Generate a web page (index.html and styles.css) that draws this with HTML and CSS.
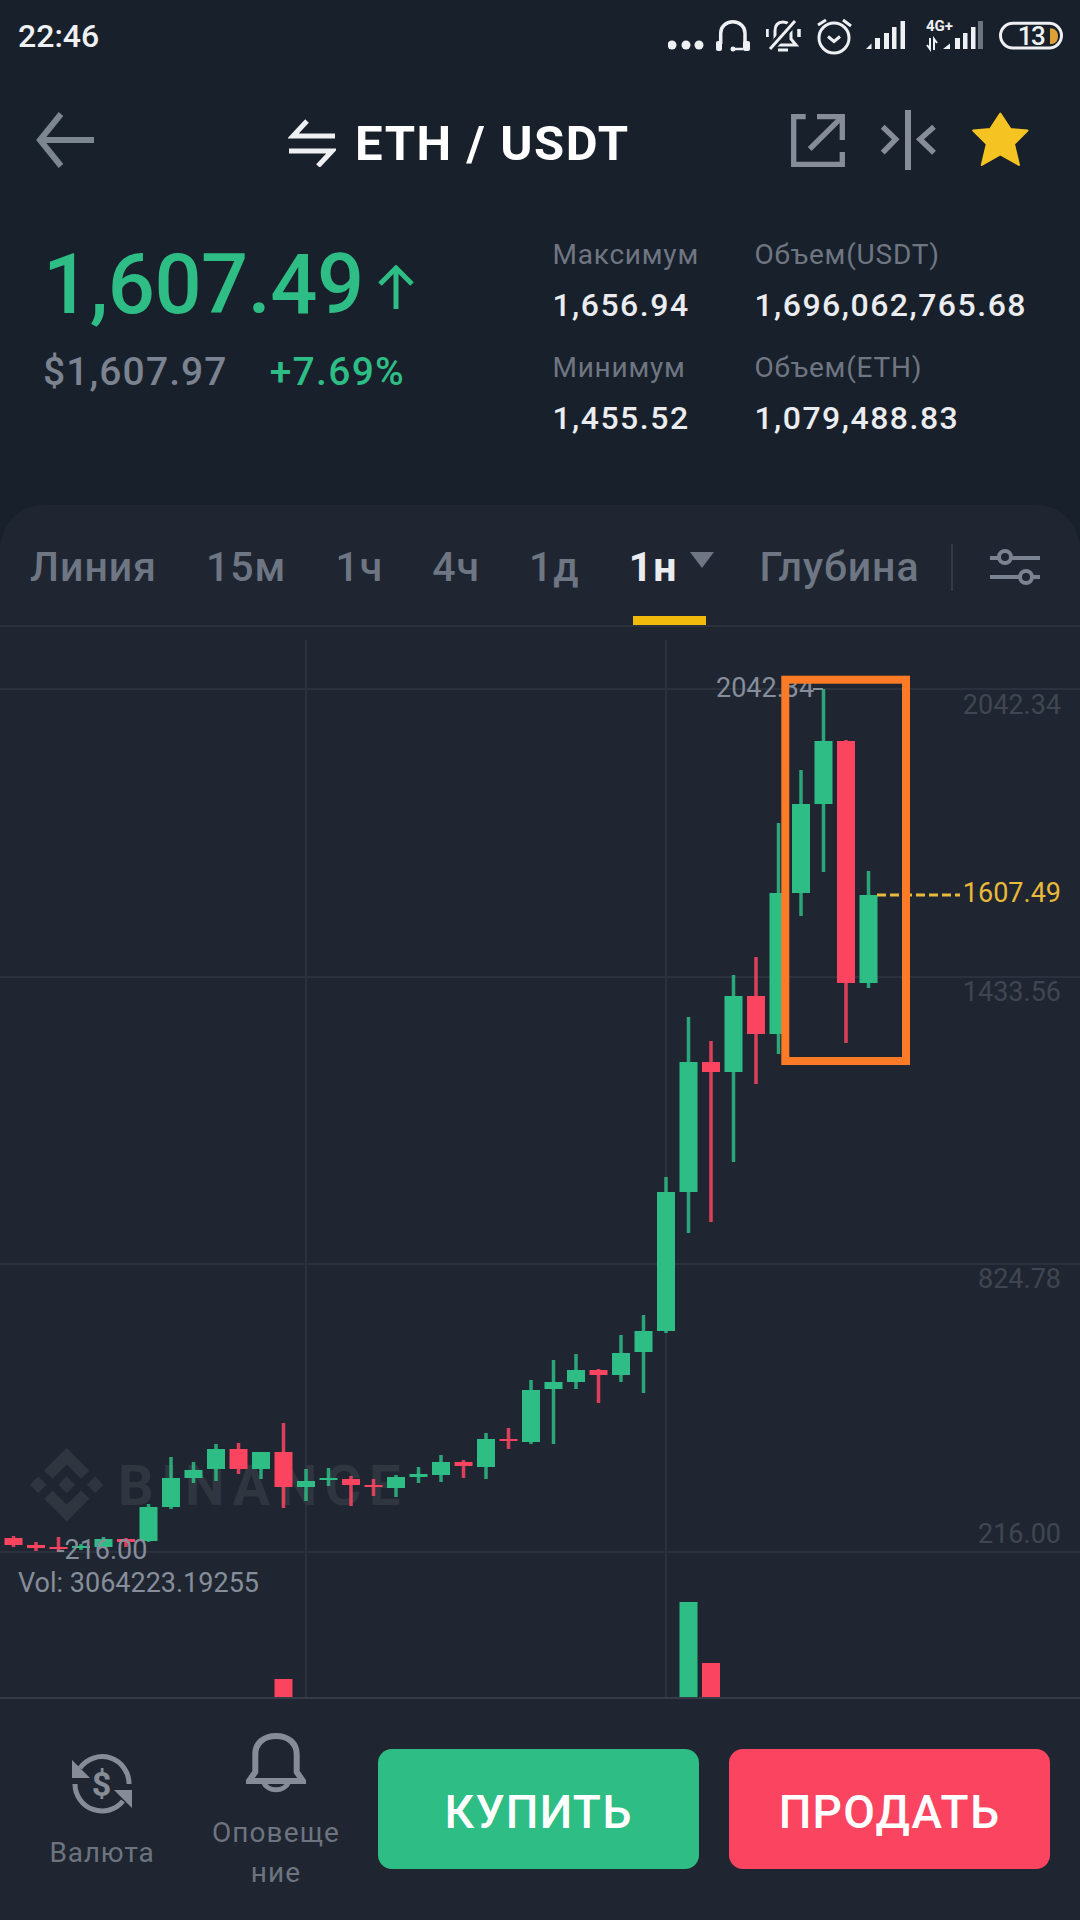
FILE: index.html
```html
<!DOCTYPE html>
<html lang="ru">
<head>
    <meta charset="UTF-8">
    <meta name="viewport" content="width=device-width, initial-scale=1.0">
    <title>ETH / USDT</title>
    <link rel="stylesheet" href="styles.css">
</head>
<body>
    <div class="status-bar">
        <span class="clock">22:46</span>
        <div class="status-icons">
            <svg width="36" height="40" viewBox="0 0 36 40"><g fill="#eef0f3"><circle cx="4" cy="29" r="4.500"/><circle cx="18" cy="29" r="4.500"/><circle cx="31" cy="29" r="4.500"/></g></svg>
            <svg width="38" height="40" viewBox="0 0 38 40" fill="none" stroke="#eef0f3" stroke-width="3.500"><path d="M4.700 28V17a12.150 11.300 0 0 1 24.300 0v11"/><path d="M27 33H17" stroke-width="2.500"/><circle cx="17" cy="33" r="2.500" fill="#eef0f3" stroke="none"/><rect x="0" y="25" width="6" height="10" rx="2" fill="#eef0f3" stroke="none"/><rect x="27" y="25" width="7" height="10" rx="2" fill="#eef0f3" stroke="none"/></svg>
            <svg width="39" height="40" viewBox="0 0 39 40" fill="none" stroke="#eef0f3" stroke-width="3"><path d="M5 29l4-6v-8c0-6 3-9 8-9s8 3 8 9v8l5 6z"/><path d="M12 34h10"/><path d="M3 34L30 4" stroke="#18202b" stroke-width="8"/><path d="M4 33L29 5"/><path d="M1 13v8M33 13v8" stroke-width="3.500"/></svg>
            <svg width="37" height="40" viewBox="0 0 37 40" fill="none" stroke="#eef0f3" stroke-width="3"><circle cx="17" cy="22" r="15"/><path d="M11 20.500l6 5 6-5"/><path d="M1 9l8-5M26 4l8 6"/></svg>
            <svg width="48" height="40" viewBox="0 0 48 40" class="signal"><path d="M0 33l5.500-5.500V33z"/><rect x="9" y="22" width="5" height="11"/><rect x="18" y="17" width="5" height="16"/><rect x="26" y="11" width="4.500" height="22"/><rect x="34.500" y="5" width="4.500" height="28"/></svg>
            <svg width="61" height="40" viewBox="0 0 61 40" class="signal"><text x="0" y="15" class="net-label">4G+</text><path d="M4 22v11l-3-4M8 34V23l3 4" fill="none" stroke="#eef0f3" stroke-width="2"/><path d="M17 33l7-5.500V33z"/><rect x="29" y="22" width="5" height="11"/><rect x="37" y="17" width="4.500" height="16"/><rect x="45" y="11" width="4.500" height="22"/><rect x="52" y="5" width="5" height="28" fill="#6d7480"/></svg>
            <svg width="64" height="40" viewBox="0 0 64 40"><rect x="1.500" y="7.200" width="61" height="24.800" rx="12.400" fill="none" stroke="#eef0f3" stroke-width="3"/><text x="32" y="29" class="battery-label" text-anchor="middle">13</text><path d="M51 12.300c5 0 8 3 8 8s-3 8-8 8z" fill="#dca036"/></svg>
        </div>
    </div>

    <div class="header">
        <svg class="back" width="58" height="56" viewBox="0 0 58 56" fill="none" stroke="#7b8691" stroke-width="6"><path d="M58 28H4"/><path d="M25 2L4 28l21 26"/></svg>
        <div class="title">
            <svg width="48" height="48" viewBox="0 0 48 48" fill="none" stroke="#eef0f3" stroke-width="5"><path d="M19 2L5 17h42"/><path d="M1 32h43L30 47"/></svg>
            <span>ETH / USDT</span>
        </div>
        <div class="header-actions">
            <svg class="share" width="54" height="53" viewBox="0 0 54 53" fill="none" stroke="#868d99" stroke-width="5.300"><path d="M14.700 2.700h-12v47.600h48.600V38"/><path d="M26 2.700h25.300V26"/><path d="M51.300 2.700L18.700 35"/></svg>
            <svg class="compress" width="57" height="60" viewBox="0 0 57 60" fill="none" stroke="#868d99" stroke-width="5.500"><path d="M28 0v60" stroke-width="6"/><path d="M2.700 16.700l13 12.600-13 13.400"/><path d="M54 16.700L40 29.300l14 13.400"/></svg>
            <svg class="star" width="58" height="56" viewBox="0 0 58 56"><path d="M28.300 1.500L38.500 17l17 1.500-13.500 13.500 5 21-18.700-10.500L9.800 53l5-21L1.200 18.500l17-1.500z" fill="#f5c422" stroke="#f5c422" stroke-width="2" stroke-linejoin="round"/></svg>
        </div>
    </div>

    <div class="stats">
        <div class="price-box">
            <div class="price">
                <span>1,607.49</span>
                <svg width="36" height="44" viewBox="0 0 36 44" fill="none" stroke="#2ebd85" stroke-width="5"><path d="M18 44V3"/><path d="M2 19L18 3l16 16"/></svg>
            </div>
            <div class="price-sub">
                <span class="usd">$1,607.97</span>
                <span class="change">+7.69%</span>
            </div>
        </div>
        <div class="market">
            <div class="cell"><span class="cell-label">Максимум</span><span class="cell-value">1,656.94</span></div>
            <div class="cell"><span class="cell-label">Объем(USDT)</span><span class="cell-value">1,696,062,765.68</span></div>
            <div class="cell"><span class="cell-label">Минимум</span><span class="cell-value">1,455.52</span></div>
            <div class="cell"><span class="cell-label">Объем(ETH)</span><span class="cell-value">1,079,488.83</span></div>
        </div>
    </div>

    <div class="panel">
        <div class="tabs">
            <span class="tab">Линия</span>
            <span class="tab">15м</span>
            <span class="tab">1ч</span>
            <span class="tab">4ч</span>
            <span class="tab">1д</span>
            <span class="tab active">1н<i class="caret"></i></span>
            <span class="tab tab-depth">Глубина</span>
            <span class="tab-divider"></span>
            <svg width="50" height="36" viewBox="0 0 50 36" fill="none" stroke="#7b8290" stroke-width="4"><path d="M0 9h9M22 9h28"/><circle cx="15" cy="8" r="6"/><path d="M0 28h29M42 28h8"/><circle cx="36" cy="28" r="6"/></svg>
        </div>

        <div class="chart">
            <svg id="chart" width="1080" height="1070" viewBox="0 627 1080 1070"></svg>
        </div>

        <div class="bottom-bar">
            <div class="action action-currency">
                <svg width="60" height="60" viewBox="0 0 60 60" fill="none" stroke="#868d99" stroke-width="5"><path d="M8 14A27 27 0 0 1 57 30"/><path d="M3 30a27 27 0 0 0 48 17"/><path d="M0 6v18h18zM60 36v18L42 36z" fill="#868d99" stroke="none"/><text x="30" y="42" class="dollar" text-anchor="middle">$</text></svg>
                <span>Валюта</span>
            </div>
            <div class="action action-alert">
                <svg width="60" height="63" viewBox="0 0 60 63" fill="none" stroke="#868d99" stroke-width="6"><path d="M3 48l6.300-9V21C9.300 10 18 3 30 3s20.700 7 20.700 18v18l6.300 9z"/><path d="M18 50a12.500 9.500 0 0 0 24 0" stroke-width="5"/></svg>
                <span>Оповеще<br>ние</span>
            </div>
            <button class="btn btn-buy">КУПИТЬ</button>
            <button class="btn btn-sell">ПРОДАТЬ</button>
        </div>
    </div>

    <script src="chart.js"></script>
</body>
</html>
```

FILE: styles.css
```css
* {
    margin: 0;
    padding: 0;
    box-sizing: border-box;
}

body {
    width: 1080px;
    height: 1920px;
    overflow: hidden;
    background: #18202b;
    font-family: 'Roboto', sans-serif;
    color: #eaecef;
}

.status-bar {
    height: 72px;
    display: flex;
    align-items: center;
    justify-content: space-between;
    padding: 0 17px 0 18px;
}

.clock {
    font-size: 32px;
    font-weight: 500;
    color: #eef0f3;
}

.status-icons {
    display: flex;
    align-items: center;
    gap: 12px;
}

.signal {
    fill: #eef0f3;
}

.net-label {
    font-size: 15px;
    font-weight: 700;
    fill: #eef0f3;
}

.battery-label {
    font-size: 26px;
    font-weight: 500;
    letter-spacing: -1.500px;
    fill: #eef0f3;
}

.header {
    height: 136px;
    display: flex;
    align-items: center;
    padding: 0 50px 0 36px;
}

.title {
    display: flex;
    align-items: center;
    gap: 19px;
    margin: 6px 0 0 194px;
    font-size: 49px;
    font-weight: 700;
    letter-spacing: 1.600px;
    color: #fff;
}

.header-actions {
    display: flex;
    align-items: center;
    gap: 35px;
    margin-left: auto;
}

.stats {
    height: 297px;
    display: flex;
    justify-content: space-between;
    padding: 28px 53px 0 43px;
}

.price {
    display: flex;
    align-items: center;
    gap: 14px;
    font-size: 83px;
    font-weight: 500;
    color: #2ebd85;
    line-height: 98px;
    letter-spacing: -.500px;
}

.price svg {
    margin-top: 4px;
}

.price-sub {
    display: flex;
    gap: 42px;
    margin-top: 14px;
    font-size: 39px;
    line-height: 48px;
}

.usd {
    color: #7b8290;
    font-weight: 500;
    letter-spacing: 1.100px;
}

.change {
    color: #2ebd85;
    font-weight: 500;
    letter-spacing: 1.300px;
}

.market {
    display: grid;
    grid-template-columns: 202px auto;
    row-gap: 13px;
    align-content: start;
    margin-top: -3px;
}

.cell {
    display: flex;
    flex-direction: column;
}

.cell-label {
    font-size: 28px;
    line-height: 44px;
    letter-spacing: .8px;
    color: #6f7682;
}

.cell-value {
    font-size: 32px;
    line-height: 56px;
    font-weight: 500;
    letter-spacing: 1.500px;
    color: #eaecef;
}

.panel {
    height: 1415px;
    background: #1f2631;
    border-radius: 44px 44px 0 0;
}

.tabs {
    height: 122px;
    display: flex;
    align-items: stretch;
    gap: 49px;
    padding: 4px 0 0 30px;
    border-bottom: 2px solid #2a313c;
    font-size: 41px;
    font-weight: 500;
    letter-spacing: 1px;
    color: #6e7683;
}

.tab {
    position: relative;
    display: flex;
    align-items: center;
}

.tab.active {
    color: #eaecef;
    font-weight: 700;
}

.tab.active::after {
    content: '';
    position: absolute;
    left: 4px;
    bottom: 0;
    width: 73px;
    height: 9px;
    background: #f0b90b;
}

.caret {
    width: 0;
    height: 0;
    margin: -14px 0 0 13px;
    border-left: 12px solid transparent;
    border-right: 12px solid transparent;
    border-top: 16px solid #6e7683;
}

.tab-depth {
    margin-left: -4px;
}

.tab-divider {
    align-self: center;
    width: 2px;
    height: 47px;
    margin-left: -18px;
    background: #343b46;
}

.tabs svg {
    align-self: center;
    margin-left: -12px;
}

.chart {
    height: 1070px;
}

.chart svg {
    display: block;
}

.grid-line {
    stroke: #2b323d;
    stroke-width: 2;
}

.watermark {
    font-size: 56px;
    font-weight: 700;
    letter-spacing: 7.500px;
    fill: #30363f;
}

.watermark-logo {
    fill: #30363f;
}

.axis-label {
    font-size: 27px;
    fill: #3f4651;
}

.axis-label.last {
    fill: #e8b93a;
}

.chart-note {
    font-size: 27px;
    fill: #868e9b;
}

.bottom-bar {
    height: 223px;
    display: flex;
    align-items: flex-start;
    border-top: 2px solid #353c47;
    font-size: 28px;
    letter-spacing: .8px;
    color: #6d7480;
}

.action {
    display: flex;
    flex-direction: column;
    align-items: center;
    text-align: center;
}

.action span {
    line-height: 40px;
}

.action-currency {
    width: 204px;
    padding-top: 55px;
    gap: 19px;
}

.action-alert {
    width: 144px;
    padding-top: 34px;
    gap: 17px;
    letter-spacing: 1.100px;
}

.dollar {
    font-size: 34px;
    font-weight: 700;
    fill: #868d99;
    stroke: none;
}

.btn {
    width: 321px;
    height: 120px;
    margin-top: 50px;
    padding-top: 5px;
    border: none;
    border-radius: 14px;
    font-family: 'Roboto', sans-serif;
    font-size: 46px;
    font-weight: 500;
    letter-spacing: 1.300px;
    color: #fff;
}

.btn-buy {
    margin-left: 30px;
    background: #2ebd85;
}

.btn-sell {
    margin-left: 30px;
    background: #fb4560;
}
```

FILE: chart.js
```js
const NS = 'http://www.w3.org/2000/svg';
const GREEN = '#2ebd85';
const RED = '#fb4560';
const svg = document.getElementById('chart');

// [center x, wick top, wick bottom, body top, body bottom, color]
const candles = [
    [13.5, 1536, 1547, 1538, 1545, RED],
    [36, 1542, 1551, 1545, 1548, RED],
    [58.5, 1537, 1552, 1547, 1549, RED],
    [81, 1544, 1550, 1546, 1548, GREEN],
    [103.5, 1537, 1548, 1539, 1547, GREEN],
    [126, 1538, 1547, 1539, 1542, RED],
    [148.5, 1504, 1542, 1507, 1541, GREEN],
    [171, 1457, 1509, 1478, 1507, GREEN],
    [193.5, 1462, 1483, 1470, 1478, GREEN],
    [216, 1444, 1481, 1449, 1469, GREEN],
    [238.5, 1443, 1474, 1449, 1469, RED],
    [261, 1452, 1479, 1452, 1469, GREEN],
    [283.5, 1423, 1508, 1452, 1487, RED],
    [306, 1469, 1501, 1481, 1487, GREEN],
    [328.5, 1468, 1486, 1478, 1480, GREEN],
    [351, 1476, 1506, 1479, 1485, RED],
    [373.5, 1479, 1496, 1485, 1487, RED],
    [396, 1475, 1497, 1477, 1488, GREEN],
    [418.5, 1467, 1483, 1474, 1477, GREEN],
    [441, 1455, 1482, 1462, 1475, GREEN],
    [463.5, 1460, 1478, 1462, 1466, RED],
    [486, 1433, 1479, 1439, 1467, GREEN],
    [508.5, 1428, 1449, 1439, 1441, RED],
    [531, 1380, 1444, 1390, 1442, GREEN],
    [553.5, 1360, 1444, 1382, 1389, GREEN],
    [576, 1354, 1389, 1370, 1382, GREEN],
    [598.5, 1369, 1403, 1370, 1375, RED],
    [621, 1335, 1382, 1353, 1375, GREEN],
    [643.5, 1315, 1393, 1331, 1352, GREEN],
    [666, 1177, 1333, 1192, 1331, GREEN],
    [688.5, 1017, 1233, 1062, 1192, GREEN],
    [711, 1041, 1222, 1062, 1072, RED],
    [733.5, 975, 1162, 996, 1072, GREEN],
    [756, 957, 1084, 996, 1034, RED],
    [778.5, 823, 1054, 893, 1034, GREEN],
    [801, 770, 916, 804, 893, GREEN],
    [823.5, 689, 872, 741, 804, GREEN],
    [846, 740, 1043, 741, 983, RED],
    [868.5, 871, 988, 895, 983, GREEN]
];

// [x, top, color]
const volumes = [
    [283.5, 1679, RED],
    [688.5, 1602, GREEN],
    [711, 1663, RED]
];

const axisLabels = [
    ['2042.34', 714, ''],
    ['1607.49', 902, 'last'],
    ['1433.56', 1001, ''],
    ['824.78', 1288, ''],
    ['216.00', 1543, '']
];

function add(tag, attrs, parent = svg) {
    const el = document.createElementNS(NS, tag);
    for (const key in attrs) el.setAttribute(key, attrs[key]);
    parent.appendChild(el);
    return el;
}

function addText(text, x, y, cls, anchor = 'start') {
    add('text', { x, y, class: cls, 'text-anchor': anchor }).textContent = text;
}

// Grid
[689, 977, 1264, 1552].forEach(y => {
    add('line', { x1: 0, x2: 1080, y1: y, y2: y, class: 'grid-line' });
});
[306, 666].forEach(x => {
    add('line', { x1: x, x2: x, y1: 640, y2: 1697, class: 'grid-line' });
});

// Watermark
const logo = add('g', { class: 'watermark-logo', transform: 'translate(30 1448) scale(.58)' });
add('path', { d: 'M38.73 53.2l24.59-24.58 24.6 24.6 14.3-14.31L63.32 0 24.42 38.9zM0 63.31L14.3 49l14.31 14.31-14.31 14.3zM38.73 73.41L63.32 98l24.6-24.6 14.31 14.29-38.9 38.91-38.91-38.88zM98 63.31L112.3 49l14.31 14.3-14.31 14.31zM77.83 63.3L63.32 48.78 52.59 59.51l-1.24 1.23-2.54 2.54 14.51 14.5 14.51-14.47z' }, logo);
addText('BINANCE', 118, 1505, 'watermark');

// Candles
candles.forEach(([x, high, low, top, bottom, color]) => {
    add('rect', { x: x - 1.75, y: high, width: 3.5, height: low - high, fill: color, opacity: .85 });
    add('rect', { x: x - 9, y: top, width: 18, height: bottom - top, fill: color });
});

volumes.forEach(([x, top, color]) => {
    add('rect', { x: x - 9, y: top, width: 18, height: 1697 - top, fill: color });
});

// Labels
axisLabels.forEach(([text, y, cls]) => {
    addText(text, 1061, y, 'axis-label ' + cls, 'end');
});
addText('2042.34', 716, 697, 'chart-note');
add('line', { x1: 813, x2: 823, y1: 689, y2: 689, stroke: '#868e9b', 'stroke-width': 2 });
addText('-216.00', 57, 1559, 'chart-note');
addText('Vol: 3064223.19255', 18, 1592, 'chart-note');

// Last price line
add('line', { x1: 877, x2: 960, y1: 895, y2: 895, stroke: '#e8b93a', 'stroke-width': 3, 'stroke-dasharray': '9 4' });

// Marked area
add('rect', { x: 785.3, y: 679.7, width: 120.7, height: 381.3, fill: 'none', stroke: '#fd7b26', 'stroke-width': 8 });
```
